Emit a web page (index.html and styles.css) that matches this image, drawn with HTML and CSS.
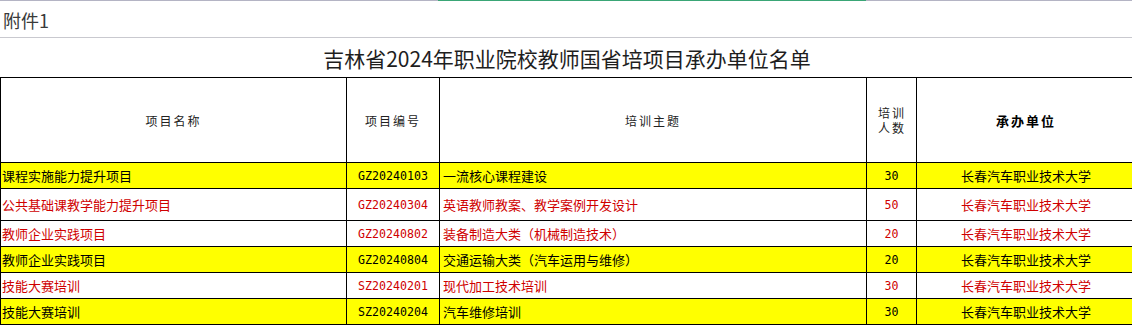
FILE: index.html
```html
<!DOCTYPE html>
<html lang="zh-CN">
<head>
<meta charset="utf-8">
<title>吉林省2024年职业院校教师国省培项目承办单位名单</title>
<link rel="stylesheet" href="styles.css">
</head>
<body>
<div class="colbar"><span class="seg-a"></span><span class="seg-sel"></span><span class="seg-b"></span></div>
<div class="attach">附件1</div>
<div class="title">吉林省2024年职业院校教师国省培项目承办单位名单</div>
<div class="table">
  <div class="cell head">项目名称</div>
  <div class="cell head">项目编号</div>
  <div class="cell head">培训主题</div>
  <div class="cell head small">培训<br>人数</div>
  <div class="cell head bold">承办单位</div>

  <div class="row yellow">
    <div class="cell left first">课程实施能力提升项目</div>
    <div class="cell mono">GZ20240103</div>
    <div class="cell left">一流核心课程建设</div>
    <div class="cell mono">30</div>
    <div class="cell">长春汽车职业技术大学</div>
  </div>
  <div class="row red">
    <div class="cell left first">公共基础课教学能力提升项目</div>
    <div class="cell mono">GZ20240304</div>
    <div class="cell left">英语教师教案、教学案例开发设计</div>
    <div class="cell mono">50</div>
    <div class="cell">长春汽车职业技术大学</div>
  </div>
  <div class="row red">
    <div class="cell left first">教师企业实践项目</div>
    <div class="cell mono">GZ20240802</div>
    <div class="cell left">装备制造大类（机械制造技术）</div>
    <div class="cell mono">20</div>
    <div class="cell">长春汽车职业技术大学</div>
  </div>
  <div class="row yellow">
    <div class="cell left first">教师企业实践项目</div>
    <div class="cell mono">GZ20240804</div>
    <div class="cell left">交通运输大类（汽车运用与维修）</div>
    <div class="cell mono">20</div>
    <div class="cell">长春汽车职业技术大学</div>
  </div>
  <div class="row red">
    <div class="cell left first">技能大赛培训</div>
    <div class="cell mono">SZ20240201</div>
    <div class="cell left">现代加工技术培训</div>
    <div class="cell mono">30</div>
    <div class="cell">长春汽车职业技术大学</div>
  </div>
  <div class="row yellow">
    <div class="cell left first">技能大赛培训</div>
    <div class="cell mono">SZ20240204</div>
    <div class="cell left">汽车维修培训</div>
    <div class="cell mono">30</div>
    <div class="cell">长春汽车职业技术大学</div>
  </div>
</div>
</body>
</html>
```

FILE: styles.css
```css
html, body {
  margin: 0;
  padding: 0;
  background: #ffffff;
  overflow: hidden;
}
body {
  width: 1132px;
  height: 325px;
  font-family: "Noto Sans CJK SC", "Noto Sans", sans-serif;
  color: #000;
}
.colbar {
  display: flex;
  height: 1px;
}
.seg-a { width: 438px; background: #b4b4c4; }
.seg-sel { width: 428px; background: #3aa676; }
.seg-b { flex: 1; background: #b4b4c4; }

.attach {
  border-bottom: 1px solid #c9c9cf;
  display: flex;
  align-items: center;
  padding: 2px 0 0 3px;
  height: 34px;
  font-size: 18px;
  color: #3a3a3a;
}
.title {
  height: 39px;
  display: flex;
  align-items: center;
  justify-content: center;
  font-size: 21px;
  color: #1e1e1e;
  padding-left: 2px;
}
.table {
  display: grid;
  grid-template-columns: 345px 92px 426px 49px 1fr;
  grid-template-rows: 84px 25px 31px 25px 25px 25px 25px;
  gap: 1px;
  padding: 1px;
  width: 1136px;
  box-sizing: border-box;
  background: #000;
}
.row {
  display: contents;
}
.cell {
  background: #fff;
  display: flex;
  align-items: center;
  justify-content: center;
  font-size: 13px;
  white-space: nowrap;
  overflow: hidden;
}
.head {
  font-size: 12px;
  letter-spacing: 2px;
  color: #222;
  text-align: center;
}
.head.small {
  line-height: 15px;
  padding-left: 1px;
}
.head.bold {
  font-weight: bold;
  font-size: 13px;
  color: #000;
}
.left {
  justify-content: flex-start;
  padding-left: 3px;
}
.left.first {
  padding-left: 1px;
}
.mono {
  font-family: "DejaVu Sans Mono", "Liberation Mono", monospace;
  font-size: 11.6px;
}
.yellow .cell {
  background: #ffff00;
  color: #000;
}
.red .cell {
  color: #cf0000;
}
```
